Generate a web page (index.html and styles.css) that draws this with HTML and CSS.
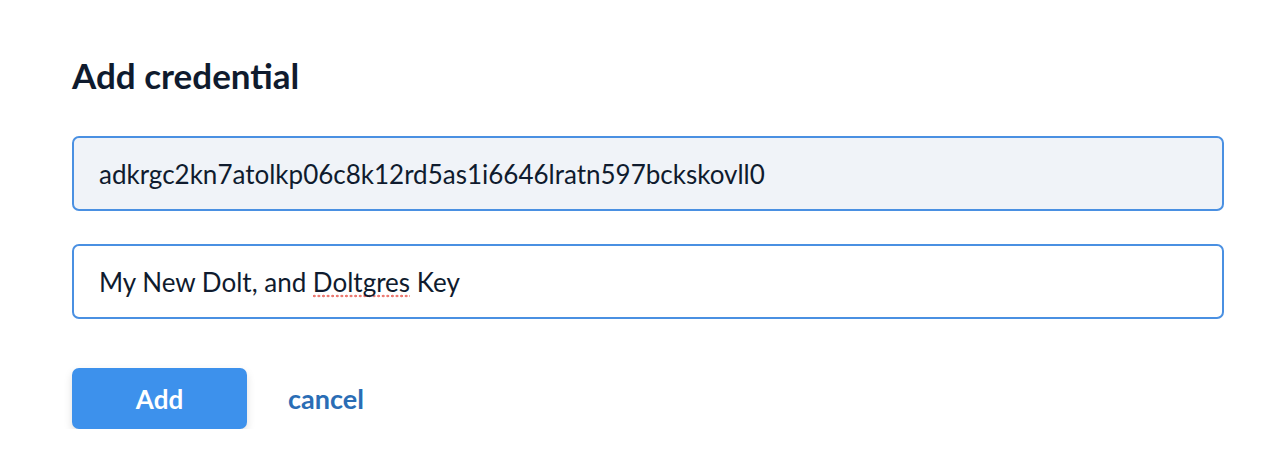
FILE: index.html
```html
<!DOCTYPE html>
<html>
<head>
<meta charset="utf-8">
<link rel="stylesheet" href="styles.css">
</head>
<body>
<div class="form">
  <h2 class="title">Add credential</h2>
  <div class="field field-readonly">adkrgc2kn7atolkp06c8k12rd5as1i6646lratn597bckskovll0</div>
  <div class="field">My New Dolt, and <span class="misspelled">Doltgres</span> Key</div>
  <div class="actions">
    <button class="btn-add">Add</button>
    <a class="cancel">cancel</a>
  </div>
</div>
</body>
</html>
```
FILE: styles.css
```css
html, body {
  margin: 0;
  padding: 0;
  background: #ffffff;
}
.form {
  padding: 53px 38px 0 72px;
  font-family: Lato, "Noto Sans", sans-serif;
  color: #0f1b2e;
}
.title {
  margin: 0 0 39px 0;
  font-size: 35px;
  line-height: 44px;
  font-weight: 700;
  color: #0f1b2e;
}
.field {
  box-sizing: border-box;
  height: 75px;
  border: 2px solid #4a90e2;
  border-radius: 7px;
  padding: 2px 25px 0 25px;
  line-height: 69px;
  font-size: 26px;
  white-space: nowrap;
  color: #0f1b2e;
  margin-bottom: 33px;
}
.field-readonly {
  background: #f0f3f8;
}
.misspelled {
  background-image: radial-gradient(circle, #ec7a72 1.2px, transparent 1.6px);
  background-size: 4.6px 4px;
  background-repeat: repeat-x;
  background-position: -1px 100%;
}
.actions {
  display: flex;
  align-items: center;
  gap: 41px;
  margin-top: 49px;
}
.btn-add {
  width: 175px;
  height: 61px;
  padding: 0;
  border: none;
  border-radius: 7px;
  background: #3d91ec;
  color: #ffffff;
  font-family: Lato, "Noto Sans", sans-serif;
  font-weight: 700;
  font-size: 26px;
  box-shadow: 0 4px 8px rgba(0, 0, 0, 0.13);
}
.cancel {
  color: #2a6db5;
  font-weight: 700;
  font-size: 27px;
}
```
